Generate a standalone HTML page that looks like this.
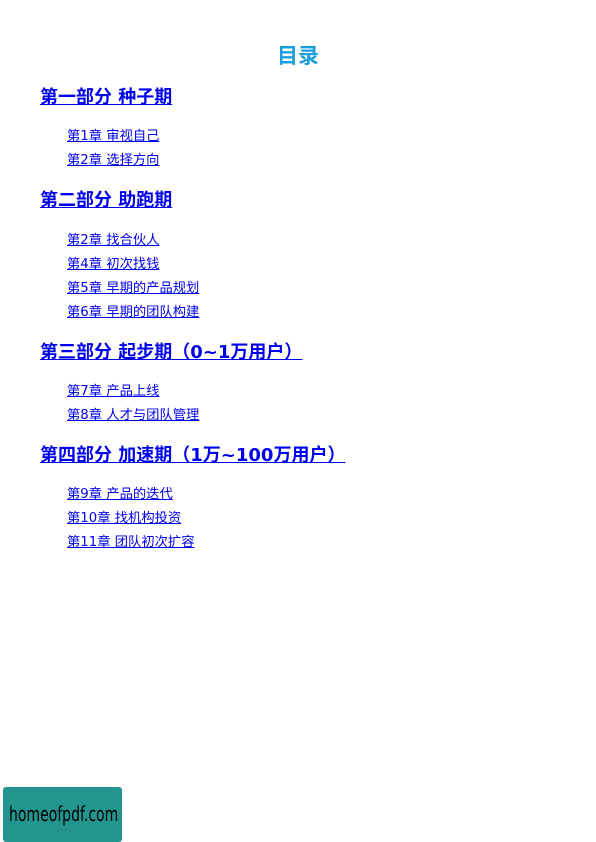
<!DOCTYPE html>
<html><head><meta charset="utf-8"><style>
body{margin:0;width:596px;height:842px;background:#fff;position:relative;font-family:"DejaVu Sans","Noto Sans CJK SC",sans-serif;overflow:hidden}
.a{position:absolute;white-space:nowrap;line-height:1}
.t{left:0;width:596px;text-align:center;top:45px;font-size:21px;font-weight:bold;color:#1a9fdc;font-family:"Noto Sans CJK SC",sans-serif}
.h{left:40px;font-size:18px;font-weight:bold;color:#0000ee;text-decoration:underline}
.i{left:67px;font-size:13.3px;color:#0000ee;text-decoration:underline}
.logo{position:absolute;left:3px;top:787px;width:119px;height:55px;background:#22958f;border-radius:3px}
.logo span{position:absolute;left:6px;top:17px;font-family:"DejaVu Sans",sans-serif;font-size:20px;line-height:1;color:#000;transform:scaleX(0.7);transform-origin:0 0;white-space:nowrap}
</style></head><body>
<div class="a t">目录</div>
<div class="a h" style="top:89px">第一部分 种子期</div>
<div class="a i" style="top:130px">第1章 审视自己</div>
<div class="a i" style="top:154px">第2章 选择方向</div>
<div class="a h" style="top:192px">第二部分 助跑期</div>
<div class="a i" style="top:234px">第2章 找合伙人</div>
<div class="a i" style="top:258px">第4章 初次找钱</div>
<div class="a i" style="top:282px">第5章 早期的产品规划</div>
<div class="a i" style="top:306px">第6章 早期的团队构建</div>
<div class="a h" style="top:344px">第三部分 起步期（0~1万用户）</div>
<div class="a i" style="top:385px">第7章 产品上线</div>
<div class="a i" style="top:409px">第8章 人才与团队管理</div>
<div class="a h" style="top:447px">第四部分 加速期（1万~100万用户）</div>
<div class="a i" style="top:488px">第9章 产品的迭代</div>
<div class="a i" style="top:512px">第10章 找机构投资</div>
<div class="a i" style="top:536px">第11章 团队初次扩容</div>
<div class="logo"><span>homeofpdf.com</span></div>
</body></html>
